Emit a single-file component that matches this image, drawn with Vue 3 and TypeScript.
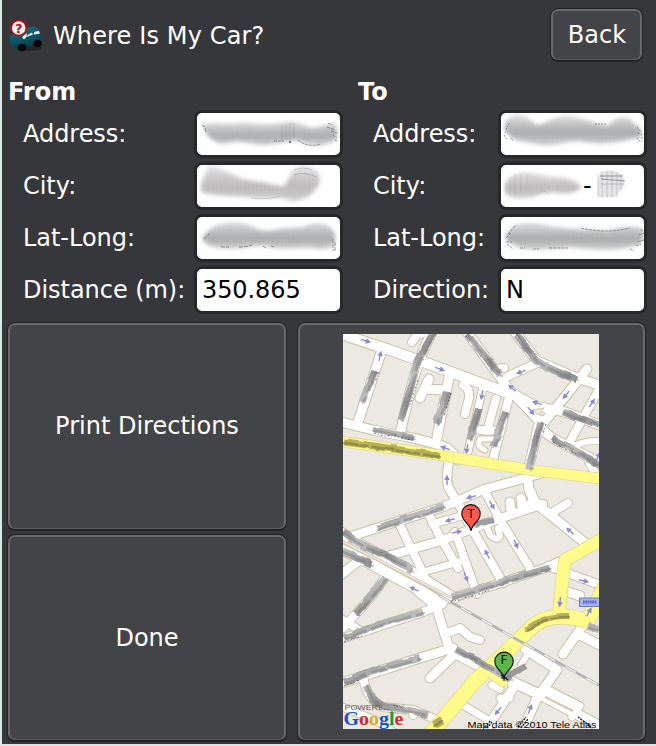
<script setup lang="ts">
interface Field {
  label: string
  value?: string
  smudge?: string
}
interface Stroke {
  d: string
  w: number
}
interface Arrow {
  x: number
  y: number
  a: number
}

const from: Field[] = [
  { label: 'Address:', smudge: 'a' },
  { label: 'City:', smudge: 'b' },
  { label: 'Lat-Long:', smudge: 'c' },
  { label: 'Distance (m):', value: '350.865' },
]
const to: Field[] = [
  { label: 'Address:', smudge: 'd' },
  { label: 'City:', smudge: 'e' },
  { label: 'Lat-Long:', smudge: 'f' },
  { label: 'Direction:', value: 'N' },
]

const smudges: Record<string, string> = {
  a: 'M5 11C18 9 30 12 46 10C62 11 76 12 88 9C100 7 106 13 114 15C124 15 132 9 139 11C141 18 140 26 137 28C125 34 112 33 103 28C90 26 80 32 66 32C52 31 46 28 36 29C20 34 10 26 5 11Z',
  b: 'M10 1C20 -1 30 8 46 14C62 17 76 19 86 22C94 14 92 4 104 1C118 -1 128 12 120 22C114 32 102 38 92 36C82 30 68 35 52 32C36 31 20 31 6 28C0 22 8 14 10 1Z',
  c: 'M5 22C12 8 28 4 44 5C54 8 60 14 72 14C84 11 94 11 106 10C122 2 138 8 138 20C139 32 128 34 116 31C100 30 86 34 70 29C54 28 42 33 28 31C16 31 10 29 5 22Z',
  d: 'M3 12C9 -3 24 -1 33 11C42 14 48 5 62 3C84 3 92 12 108 13C114 2 128 1 132 10C144 16 142 28 134 25C114 31 96 32 78 28C62 28 50 35 36 31C20 28 6 28 3 12Z',
  e: 'M4 18C14 5 30 6 46 12C60 11 74 15 80 21C77 30 62 29 50 27C36 29 28 35 14 33C2 31 4 24 4 18Z',
  f: 'M4 20C12 4 26 3 42 8C60 12 84 12 108 14C118 10 136 8 142 12C143 22 140 30 132 29C116 35 92 33 68 30C48 32 34 34 20 31C8 26 6 24 4 20Z',
}

const roads: Stroke[] = [
  { d: 'M338 332L350 337L390 350L440 368L475 381L508 393', w: 10 },
  { d: 'M382 350L357 425', w: 9 },
  { d: 'M434 328Q423 350 419 362Q411 385 401 430', w: 9 },
  { d: 'M450 373L437 437', w: 9 },
  { d: 'M340 422L373 430L413 438L440 445Q452 449 458 460', w: 9 },
  { d: 'M432 328L421 334Q417 334 412 342', w: 8 },
  { d: 'M429 379L420 398M425 389L444 390', w: 9 },
  { d: 'M463 385Q470 388 469 398L465 414', w: 8 },
  { d: 'M483 387L467 456', w: 7 },
  { d: 'M496 399L487 431', w: 8 },
  { d: 'M510 393L493 460M480 430L500 431', w: 8 },
  { d: 'M493 439L480 439Q476 447 485 450', w: 5 },
  { d: 'M464 328L508 388L542 424', w: 9 },
  { d: 'M512 328L537 361L577 378L602 386', w: 9 },
  { d: 'M537 363L502 379M497 369L504 368', w: 8 },
  { d: 'M587 369L568 393L540 427', w: 9 },
  { d: 'M512 393L535 406L565 412L602 426', w: 9 },
  { d: 'M540 420L527 474', w: 9 },
  { d: 'M601 386L568 445', w: 8 },
  { d: 'M540 424Q545 435 558 441L602 464', w: 9 },
  { d: 'M570 449Q580 440 602 441', w: 6 },
  { d: 'M589 462L595 473', w: 8 },
  { d: 'M449 460Q445 485 450 490L459 505L472 529L503 583', w: 8.5 },
  { d: 'M340 540L377 528L443 507L485 489L522 479L545 472', w: 8.5 },
  { d: 'M527 473L529 490Q536 506 548 513L590 547', w: 9 },
  { d: 'M553 512L568 503', w: 8 },
  { d: 'M543 504L498 519L440 541L388 556', w: 8.5 },
  { d: 'M510 502L511 511M521 498L522 507L534 503L531 492', w: 9 },
  { d: 'M485 492L502 523L530 568', w: 8 },
  { d: 'M485 522L490 535Q498 542 500 536L498 528', w: 6 },
  { d: 'M455 532L477 594', w: 8 },
  { d: 'M399 523L424 575M428 513L440 537L458 568', w: 8 },
  { d: 'M432 524L469 514M416 574L462 561', w: 7 },
  { d: 'M335 528L357 542L413 572L455 598', w: 9 },
  { d: 'M335 546L373 565L423 592L441 603', w: 10 },
  { d: 'M445 600L498 584L548 567L564 559', w: 8 },
  { d: 'M548 566L603 586', w: 8 },
  { d: 'M568 592L580 596M357 562L338 577', w: 9 },
  { d: 'M388 573L372 596L343 628', w: 8 },
  { d: 'M338 640L423 612L442 604', w: 8 },
  { d: 'M340 618L362 632', w: 8 },
  { d: 'M418 591L436 606L449 648L475 664', w: 9 },
  { d: 'M438 605L442 604', w: 9 },
  { d: 'M338 684L420 658L453 648', w: 9 },
  { d: 'M455 654L430 678', w: 9 },
  { d: 'M448 633L460 628L470 637L480 640', w: 8 },
  { d: 'M363 676Q366 699 383 707L413 710L440 721', w: 8 },
  { d: 'M413 711L413 715', w: 8 },
  { d: 'M340 706L375 720L395 733', w: 7 },
  { d: 'M460 656L508 680L545 697L603 728', w: 10 },
  { d: 'M525 649L557 670L537 698L522 732', w: 9 },
  { d: 'M530 650L521 665', w: 6 },
  { d: 'M583 625L563 654M578 634L603 647', w: 9 },
  { d: 'M516 684L496 714L484 732', w: 9 },
  { d: 'M492 685L500 689M500 698L510 698', w: 7 },
  { d: 'M549 690L580 706L572 717', w: 7 },
  { d: 'M458 702L510 733', w: 7 },
]

const highways: Stroke[] = [
  { d: 'M338 441L440 455L475 461L530 470L604 479', w: 10 },
  { d: 'M604 538Q580 552 565 560Q561 590 559 614', w: 12 },
  { d: 'M604 588L588 621Q550 610 531 628L498 660L475 681L438 725L428 737', w: 14 },
  { d: 'M484 668L503 682', w: 9 },
]

const marks: Stroke[] = [
  { d: 'M375 370L362 402', w: 7 },
  { d: 'M434 332Q422 352 418 362Q411 387 401 420', w: 7 },
  { d: 'M447 392L437 424', w: 8 },
  { d: 'M373 429L414 438', w: 6 },
  { d: 'M479 408L470 440M506 412L493 447', w: 7.5 },
  { d: 'M467 334L500 375', w: 7 },
  { d: 'M516 334L537 361Q545 367 577 380', w: 7 },
  { d: 'M563 412L599 425', w: 7 },
  { d: 'M552 438L600 465M541 422L529 469', w: 7.5 },
  { d: 'M377 528L443 507', w: 7 },
  { d: 'M343 532L357 542L395 560L412 570', w: 7.5 },
  { d: 'M343 551L372 565', w: 8 },
  { d: 'M451 598L498 583L549 568', w: 7 },
  { d: 'M386 578L373 594L356 614', w: 8 },
  { d: 'M344 638L380 624L423 612', w: 7 },
  { d: 'M344 682L380 669L420 658', w: 7 },
  { d: 'M366 685Q370 700 383 706L413 711L428 715', w: 7 },
  { d: 'M455 649L480 662L511 680', w: 7 },
  { d: 'M588 626L599 629', w: 8 },
]

const oliveMarks: Stroke[] = [
  { d: 'M344 442L360 444L440 456', w: 7 },
  { d: 'M526 630Q544 615 569 616', w: 6 },
  { d: 'M434 725L442 720', w: 8 },
]

const arrows: Arrow[] = [
  { x: 366, y: 341, a: 17 }, { x: 380, y: 356, a: -78 }, { x: 440, y: 369, a: 18 },
  { x: 445, y: 448, a: 200 }, { x: 467, y: 449, a: 100 }, { x: 482, y: 395, a: 100 },
  { x: 521, y: 372, a: 160 }, { x: 512, y: 388, a: 222 }, { x: 531, y: 411, a: 50 },
  { x: 537, y: 403, a: 198 }, { x: 566, y: 395, a: 130 }, { x: 592, y: 403, a: -58 },
  { x: 598, y: 457, a: -70 }, { x: 447, y: 480, a: -90 }, { x: 471, y: 497, a: 165 },
  { x: 492, y: 505, a: 62 }, { x: 450, y: 520, a: 165 }, { x: 457, y: 532, a: -12 },
  { x: 516, y: 544, a: 66 }, { x: 487, y: 554, a: 244 }, { x: 466, y: 577, a: 68 },
  { x: 570, y: 531, a: 222 }, { x: 584, y: 581, a: 14 }, { x: 414, y: 589, a: 205 },
  { x: 560, y: 602, a: 95 }, { x: 589, y: 612, a: -60 }, { x: 498, y: 711, a: 130 },
  { x: 530, y: 709, a: -70 },
]
</script>

<template>
  <main class="window">
    <header class="header">
      <svg class="logo" viewBox="0 0 36 36" aria-hidden="true">
        <defs>
          <linearGradient id="car" x1="0" y1="0" x2="0.4" y2="1">
            <stop offset="0" stop-color="#19788d" />
            <stop offset="1" stop-color="#083b4b" />
          </linearGradient>
        </defs>
        <ellipse cx="21" cy="30" rx="13" ry="3" fill="#242628" />
        <path d="M1.5 20Q4 15 12 14L19 10Q27 7 30 11Q33 15 33 22L23 28L11 31.5Q2 31 1.5 20Z" fill="url(#car)" />
        <path d="M14 19L19 15L18.5 19L16 21.5ZM18.500 18.500Q21 15.500 24 14.500L25 16.500L20 18.500ZM26 14L31 13L32 15.500L26 16.500Z" fill="#e9fbfc" />
        <ellipse cx="14" cy="29.5" rx="4.4" ry="3.8" fill="#060708" />
        <ellipse cx="29.500" cy="25.500" rx="4.200" ry="3.800" fill="#060708" />
        <circle cx="10.700" cy="10" r="7.600" fill="#f5f0ef" stroke="#ad1119" stroke-width="1.700" />
        <text x="10.700" y="14.900" text-anchor="middle" class="question">?</text>
      </svg>
      <h1>Where Is My Car?</h1>
      <button class="btn back">Back</button>
    </header>

    <section class="form">
      <div v-for="(group, g) in [from, to]" :key="g" class="group" :class="g ? 'to' : 'from'">
        <h2>{{ g ? 'To' : 'From' }}</h2>
        <div v-for="f in group" :key="f.label" class="row">
          <span class="label">{{ f.label }}</span>
          <div class="field">
            <span v-if="f.value">{{ f.value }}</span>
            <svg v-else-if="f.smudge" viewBox="0 0 143 42" class="smudge" aria-hidden="true">
              <defs>
                <filter :id="'soft' + f.smudge" x="-10%" y="-20%" width="120%" height="140%">
                  <feGaussianBlur stdDeviation="2.2" />
                </filter>
                <filter :id="'fade' + f.smudge" x="-10%" y="-20%" width="120%" height="140%">
                  <feGaussianBlur stdDeviation="0.8" />
                </filter>
                <linearGradient :id="'tone' + f.smudge" x1="0" x2="0" y1="0" y2="1">
                  <stop offset="0" stop-color="#e6e5e6" />
                  <stop offset="0.6" :stop-color="f.smudge === 'b' || f.smudge === 'e' ? '#c2bec0' : '#acaeaf'" />
                  <stop offset="1" stop-color="#d6d6d6" />
                </linearGradient>
                <pattern :id="'ripple' + f.smudge" width="4" height="60" patternUnits="userSpaceOnUse" patternTransform="translate(0 -8) rotate(-6)">
                  <rect width="1.3" height="60" fill="#75757a" opacity="0.17" />
                </pattern>
                <clipPath :id="'shape' + f.smudge"><path :d="smudges[f.smudge]" /></clipPath>
              </defs>
              <path :d="smudges[f.smudge]" :fill="`url(#tone${f.smudge})`" :filter="`url(#soft${f.smudge})`" />
              <g :filter="`url(#fade${f.smudge})`">
                <g :clip-path="`url(#shape${f.smudge})`">
                  <rect y="8" width="143" height="24" :fill="`url(#ripple${f.smudge})`" />
                </g>
              </g>
              <g fill="none" stroke="#555" stroke-width="0.8" opacity="0.75">
                <template v-if="f.smudge === 'a'">
                  <path d="M5 12l3 2M8 15l1 4" />
                  <path d="M92 29h2" stroke="#000" stroke-width="1.5" />
                  <path d="M77 28h10M101 27q10 8 23 4M131 10l4 2M130 14l8 3M134 18l6 2M136 22l4 3M138 27l2 1" stroke-dasharray="3 1" />
                  <path d="M85 12v15M89 11v16M93 10v17M97 10v15" opacity="0.35" />
                </template>
                <path v-if="f.smudge === 'b'" d="M97 5Q106 1 115 5M97 10Q108 6 119 12M54 33Q73 35 83 31" opacity="0.4" />
                <path v-if="f.smudge === 'c'" d="M7 22q3-4 6-5M24 30h8m10 0q8 0 13-2M66 29l3 2m5-2l3 1M136 22v12M138 25v9" stroke-dasharray="4 1" />
                <path v-if="f.smudge === 'd'" d="M3 22l3 5m3-17q-5 5-4 11M10 25l2 3M94 11h12M136 14l4 5M137 20l4 2M136 25l3 3M141 24v4" stroke-dasharray="2 1" />
                <template v-if="f.smudge === 'e'">
                  <path d="M5 18v12M9 12v18M14 9v20M20 8v20M26 9v16M36 30Q42 22 49 30" stroke="#9b777d" opacity="0.35" />
                  <path d="M99 7Q110 3 120 9Q126 16 121 24L114 32H97Q96 18 99 7Z" fill="#dcdde0" stroke="none" />
                  <path d="M97 9V32M101 7V33M106 6V33M111 6V33M116 7V32M120 9V25" stroke="#806f7d" opacity="0.5" />
                  <path d="M99 11H122M100 14L124 16" />
                  <path d="M100 19H124" opacity="0.5" />
                </template>
                <path v-if="f.smudge === 'f'" d="M7 17L15 8M5 21l5-5M5 25l6 0M6 27l6 5M19 31h5m8 1h6M48 31h20M80 11q24 6 49 0M135 29l5-2M137 25l6-2M138 18l5-2M129 32l4 2M140 12l2 3" stroke-dasharray="3 1" />
              </g>
              <text v-if="f.smudge === 'e'" x="82" y="29" class="dash">-</text>
            </svg>
          </div>
        </div>
      </div>
    </section>

    <section class="panels">
      <div class="actions">
        <button class="btn">Print Directions</button>
        <button class="btn">Done</button>
      </div>
      <div class="btn mapbox">
        <svg class="map" viewBox="343 334 256 395" role="img">
          <defs>
            <linearGradient id="grey" gradientUnits="userSpaceOnUse" x1="343" y1="334" x2="352" y2="354" spreadMethod="reflect">
              <stop offset="0" stop-color="#929292" />
              <stop offset="1" stop-color="#bebebe" />
            </linearGradient>
            <filter id="rough" x="-5%" y="-5%" width="110%" height="110%">
              <feTurbulence type="fractalNoise" baseFrequency="0.09" numOctaves="1" seed="4" result="n" />
              <feDisplacementMap in="SourceGraphic" in2="n" scale="4" xChannelSelector="R" yChannelSelector="G" result="d" />
              <feGaussianBlur in="d" stdDeviation="0.7" />
            </filter>
            <g id="arrow">
              <path d="M-5 0H1" stroke="#8c8cc8" stroke-width="1.4" />
              <path d="M0-2.8L5.4 0L0 2.8Z" fill="#8c8cc8" />
            </g>
            <path id="pin" d="M0 0C-1-8-9.2-9-9.2-17.2A9.2 9.2 0 0 1 9.2-17.2C9.2-9 1-8 0 0Z" stroke="#111" stroke-width="1.1" />
          </defs>
          <rect x="343" y="334" width="256" height="395" fill="#ece9e2" />
          <g fill="none" stroke-linecap="round" stroke-linejoin="round">
            <path v-for="(r, i) in roads" :key="'c' + i" :d="r.d" :stroke-width="r.w + 1.9" stroke="#c9bfa6" />
            <path v-for="(r, i) in roads" :key="'r' + i" :d="r.d" :stroke-width="r.w" stroke="#fff" />
            <path v-for="(r, i) in highways" :key="'k' + i" :d="r.d" :stroke-width="r.w + 1.6" stroke="#e2d89c" />
            <path v-for="(r, i) in highways" :key="'h' + i" :d="r.d" :stroke-width="r.w" stroke="#fffb8b" />
            <path d="M340 540L450 597" stroke="#cfc4aa" stroke-width="3" />
            <path d="M340 540L450 597" stroke="#ece9e2" stroke-width="1.5" />
            <path d="M440 596L465 610L532 648L602 687" stroke="#b4b4b4" stroke-width="2.6" />
            <path d="M440 596L465 610L532 648L602 687" stroke="#f0f0f0" stroke-width="1.4" stroke-dasharray="12 12" stroke-linecap="butt" />
          </g>
          <path d="M532 410L544 408L539 415Z" fill="#ece9e2" stroke="#d3c9b3" />
          <path d="M545 697L573 711" stroke="#d3c9b3" stroke-width="2.5" />
          <use v-for="(a, i) in arrows" :key="'a' + i" href="#arrow" :transform="`translate(${a.x} ${a.y}) rotate(${a.a})`" />
          <g fill="none" stroke-linejoin="round" filter="url(#rough)">
            <path v-for="(m, i) in marks" :key="'m' + i" :d="m.d" :stroke-width="m.w" stroke="url(#grey)" />
            <path v-for="(m, i) in marks" :key="'n' + i" :d="m.d" transform="translate(1 1)" stroke-width="2.6" stroke="#666" stroke-dasharray="22 7 13 5" stroke-linecap="round" opacity="0.35" />
            <path v-for="(m, i) in oliveMarks" :key="'o' + i" :d="m.d" :stroke-width="m.w" stroke="#b6b05a" />
            <path v-for="(m, i) in oliveMarks" :key="'p' + i" :d="m.d" transform="translate(0 1)" stroke-width="2.4" stroke="#6d692c" stroke-dasharray="24 5 20 3" stroke-linecap="round" opacity="0.5" />
            <path d="M474 525L493 520M507 676L526 666" stroke="#888" stroke-width="6" opacity="0.8" />
          </g>
          <path d="M374 433l10 3l10-1l10 4l10 1M451 601l8-1l8-3l10-2l12-5M344 642l8-3l10-3M344 686l8-3l8-3M418 380l-4 11l-4 14M451 393l-4 12l-3 12M379 372l-4 10M546 424l-3 10M553 442l12 7l12 5M384 709l14 4M466 336l5 5M516 334l4 4M574 382l4 0" fill="none" stroke="#3a3a3a" stroke-width="0.9" stroke-dasharray="2 2 1 2" opacity="0.8" />
          <rect x="579.5" y="598" width="21" height="8.5" fill="#aab4ef" stroke="#6d78cb" />
          <path d="M583 602H597" stroke="#5967bd" stroke-width="3" stroke-dasharray="1.6 0.7" />
          <use href="#pin" x="471" y="531" fill="#f8594e" />
          <use href="#pin" x="504" y="678.5" fill="#5bb846" />
          <text x="471" y="517.5" text-anchor="middle" class="pin-label">T</text>
          <text x="504" y="664" text-anchor="middle" class="pin-label">F</text>
          <path d="M501 675L508 680M504 674V681M501 678H507" stroke="#151515" stroke-width="1.1" />
          <text x="344.5" y="710" class="powered" textLength="60" lengthAdjust="spacingAndGlyphs">POWERED BY</text>
          <path d="M383 706.5L404 710" stroke="#a5a5a5" stroke-width="4" opacity="0.85" />
          <text x="343.5" y="725" class="google" textLength="60" lengthAdjust="spacingAndGlyphs"><tspan fill="#1751c4">G</tspan><tspan fill="#d42d2c">o</tspan><tspan fill="#e6a714">o</tspan><tspan fill="#1751c4">g</tspan><tspan fill="#20973a">l</tspan><tspan fill="#d42d2c">e</tspan></text>
          <path d="M485 727L491 720M487 728L492 722M518 727L526 717M521 728L528 719M578 717L591 727" stroke="#222" stroke-width="1.5" stroke-dasharray="2 1" />
          <text x="467.5" y="727.5" class="credit" textLength="129" lengthAdjust="spacingAndGlyphs">Map data ©2010 Tele Atlas</text>
        </svg>
      </div>
    </section>
  </main>
</template>

<style>
body {
  margin: 0;
}
</style>

<style scoped>
.window {
  box-sizing: border-box;
  width: 656px;
  height: 746px;
  overflow: hidden;
  border-left: 2px solid #dde8e2;
  border-bottom: 2px solid #dde3e2;
  background: #36373a;
  color: #fff;
  font: 24px/28px "DejaVu Sans", sans-serif;
}
.header {
  display: flex;
  align-items: center;
  height: 54px;
  padding: 8px 13px 0 6px;
}
.logo {
  width: 36px;
  height: 36px;
  margin: 2px 9px 0 0;
}
.question {
  font: bold 13px "DejaVu Sans", sans-serif;
  fill: #ad1119;
}
h1,
h2 {
  margin: 0;
  font-size: 24px;
  font-weight: 400;
}
h1 {
  flex: 1;
  padding-top: 2px;
  letter-spacing: 0.13px;
}
h2 {
  height: 32px;
  padding: 1px 0 0 6px;
  font-weight: 700;
}
.btn {
  box-sizing: border-box;
  display: flex;
  align-items: center;
  justify-content: center;
  margin: 0;
  padding: 0;
  border: 1px solid #222325;
  border-bottom-width: 2px;
  border-radius: 8px;
  background: #434447;
  box-shadow: inset 0 2px #68696b, inset 2px 0 #68696b, inset -2px 0 #68696b, inset 0 -1px #5c5d60;
  color: #fff;
  font: inherit;
}
.back {
  width: 93px;
  height: 54px;
  padding-left: 1px;
}
.form {
  display: flex;
  padding-top: 15px;
}
.group.from {
  width: 350px;
}
.group.to {
  width: 295px;
}
.row {
  display: flex;
  align-items: center;
  justify-content: space-between;
  height: 48px;
  margin-bottom: 4px;
  padding-left: 21px;
}
.from .row {
  padding-right: 9px;
}
.label {
  letter-spacing: -0.04px;
}
.field {
  box-sizing: border-box;
  display: flex;
  flex: none;
  align-items: center;
  width: 149px;
  height: 48px;
  border: 3px solid #262729;
  border-radius: 8px;
  background: #fff;
  color: #000;
}
.field span {
  padding-left: 5px;
  letter-spacing: -0.1px;
}
.smudge {
  width: 143px;
  height: 42px;
}
.dash {
  font: 24px "DejaVu Sans", sans-serif;
}
.panels {
  display: flex;
  gap: 10px;
  height: 420px;
  padding: 4px 9px 0 5px;
}
.actions {
  display: flex;
  flex-direction: column;
  gap: 3px;
  width: 280px;
}
.actions .btn {
  height: 209px;
}
.actions .btn:last-child {
  height: 208px;
}
.mapbox {
  width: 349px;
  height: 420px;
  padding-right: 2px;
}
.map {
  width: 256px;
  height: 395px;
}
.pin-label {
  font: 12px "DejaVu Sans", sans-serif;
  fill: #111;
}
.powered {
  font: 6.5px "Liberation Sans", Arial, sans-serif;
  fill: #555;
}
.google {
  font: 19px "Liberation Serif", "Times New Roman", serif;
}
.google tspan {
  stroke: currentColor;
  stroke-width: 0;
  font-weight: 700;
}
.credit {
  font: 9.5px "Liberation Sans", Arial, sans-serif;
  fill: #000;
}
</style>
